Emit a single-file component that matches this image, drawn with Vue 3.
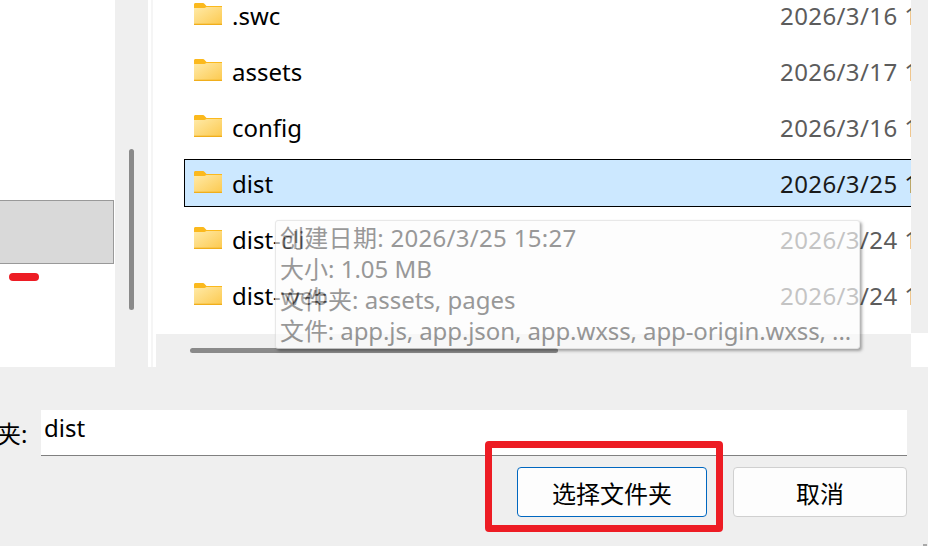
<template>
  <div class="dialog">
    <div class="top">
      <div class="nav">
        <div class="nav-box"></div>
        <div class="red-mark"></div>
      </div>
      <div class="nav-track">
        <div class="nav-thumb"></div>
      </div>
      <div class="gap-line"></div>
      <div class="list-wrap">
        <div class="rows">
          <div
            v-for="row in rows"
            :key="row.name"
            class="row"
            :class="{ selected: row.selected }"
          >
            <svg class="folder" viewBox="0 0 28 22" width="28" height="22">
              <defs>
                <linearGradient id="folderFill" x1="0" y1="0" x2="1" y2="1">
                  <stop offset="0" stop-color="#ffeaa8" />
                  <stop offset="1" stop-color="#fcc94e" />
                </linearGradient>
              </defs>
              <path d="M0 1.500C0 .6.6 0 1.500 0H8.500c1 0 1.500.4 2.100 1L12.500 3H28v4H0z" fill="#fbb91d" />
              <path d="M0 5h10.500l2-1H28v16.500c0 .9-.6 1.500-1.500 1.500h-25C.6 22 0 21.400 0 20.500z" fill="url(#folderFill)" />
              <rect x="0" y="20.700" width="28" height="1.300" fill="#f0ae1c" />
            </svg>
            <span class="name">{{ row.name }}</span>
            <span class="date">{{ row.date }}</span>
          </div>
        </div>
        <div class="h-track">
          <div class="h-thumb"></div>
        </div>
        <!-- tooltip caught mid fade-in, so the whole thing is translucent -->
        <div class="tip">
          <div class="digits">创建日期: 2026/3/25 15:27</div>
          <div>大小: 1.05 MB</div>
          <div>文件夹: assets, pages</div>
          <div class="long">文件: app.js, app.json, app.wxss, app-origin.wxss, ...</div>
        </div>
      </div>
      <div class="v-side">
        <div class="v-track"></div>
        <div class="corner"></div>
      </div>
    </div>

    <div class="bottom">
      <div class="field">
        <span class="label">文件夹:</span>
        <div class="input">dist</div>
      </div>
      <div class="buttons">
        <button class="btn primary">选择文件夹</button>
        <button class="btn cancel">取消</button>
      </div>
      <div class="highlight"></div>
      <div class="grip"></div>
    </div>
  </div>
</template>

<script setup>
const rows = [
  { name: '.swc', date: '2026/3/16 15:20' },
  { name: 'assets', date: '2026/3/17 10:12' },
  { name: 'config', date: '2026/3/16 15:20' },
  { name: 'dist', date: '2026/3/25 15:27', selected: true },
  { name: 'dist-cli', date: '2026/3/24 18:02' },
  { name: 'dist-web', date: '2026/3/24 18:05' },
]
</script>

<style>
html, body {
  margin: 0;
  overflow: hidden;
}
</style>

<style scoped>
.dialog {
  display: flex;
  flex-direction: column;
  width: 928px;
  height: 546px;
  overflow: hidden;
  background: #efefef;
  font-family: "Noto Sans", "Noto Sans CJK SC", sans-serif;
  font-size: 24px;
  color: #000;
}

.top {
  display: flex;
  height: 367px;
}

.nav {
  width: 115px;
  background: #fff;
  padding-top: 200px;
  box-sizing: border-box;
}

.nav-box {
  width: 114px;
  height: 64px;
  box-sizing: border-box;
  background: #d9d9d9;
  border: 1px solid #999;
  border-left: 0;
}

.red-mark {
  width: 30px;
  height: 8px;
  margin: 9px 0 0 9px;
  border-radius: 4px;
  background: #ed1c24;
}

.nav-track {
  width: 33px;
  padding-top: 149px;
  box-sizing: border-box;
  background: #efefef;
}

.nav-thumb {
  width: 5px;
  height: 161px;
  margin-left: 14px;
  border-radius: 3px;
  background: #8a8a8a;
}

.gap-line {
  width: 3px;
  background: #fff;
  border-right: 2px solid #f5f5f5;
}

.list-wrap {
  position: relative;
  width: 758px;
  display: flex;
  flex-direction: column;
  background: #fff;
}

.rows {
  flex: 1;
  overflow: hidden;
  padding-left: 31px;
}

.row {
  display: flex;
  align-items: center;
  height: 48px;
  margin-bottom: 8px;
  padding-left: 10px;
  box-sizing: border-box;
  white-space: nowrap;
}

.row:first-child {
  margin-top: -9px;
}

.row.selected {
  background: #cce8ff;
  border: 1px solid #000;
  border-right: 0;
  padding-left: 9px;
}

.folder {
  flex: none;
  margin-top: -2px;
}

.name {
  width: 549px;
  margin-left: 10px;
  flex: none;
}

.date {
  color: #5c5c5c;
  flex: none;
  letter-spacing: 0.4px;
  margin-left: -1px;
}

.selected .date {
  color: #1a1a1a;
}

.h-track {
  height: 33px;
  margin-left: 3px;
  padding-top: 14px;
  box-sizing: border-box;
  background: #efefef;
}

.h-thumb {
  width: 368px;
  height: 5px;
  margin-left: 34px;
  border-radius: 3px;
  background: #8a8a8a;
}

.tip {
  position: absolute;
  left: 122px;
  top: 220px;
  width: 585px;
  height: 129px;
  box-sizing: border-box;
  padding: 1px 0 0 4px;
  border: 1px solid #dcdcdc;
  border-radius: 3px;
  background: #fcfcfc;
  box-shadow: 2px 2px 3px rgba(0, 0, 0, 0.5);
  color: #626262;
  line-height: 31px;
  white-space: nowrap;
  overflow: hidden;
  opacity: 0.65;
}

.digits {
  letter-spacing: 0.3px;
}

.long {
  letter-spacing: -0.1px;
}

.v-side {
  flex: 1;
  display: flex;
  flex-direction: column;
}

.v-track {
  height: 333px;
  background: #efefef;
}

.corner {
  flex: 1;
  background: #fff;
}

.bottom {
  position: relative;
  flex: 1;
  padding-top: 43px;
}

.field {
  display: flex;
  height: 46px;
  margin-left: -51px;
  padding-right: 21px;
}

.label {
  width: 92px;
  flex: none;
  line-height: 48px;
}

.input {
  flex: 1;
  box-sizing: border-box;
  padding: 0 3px;
  background: #fff;
  border-bottom: 1px solid #808080;
  line-height: 36px;
}

.buttons {
  display: flex;
  justify-content: flex-end;
  gap: 26px;
  margin-top: 11px;
  padding-right: 21px;
}

.btn {
  height: 50px;
  box-sizing: border-box;
  font: inherit;
  color: #000;
  background: #fdfdfd;
  border-radius: 4px;
  padding: 0;
}

.primary {
  width: 190px;
  border: 1px solid #0067c0;
}

.cancel {
  width: 174px;
  border: 1px solid #d0d0d0;
}

.highlight {
  position: absolute;
  left: 485px;
  top: 74px;
  width: 238px;
  height: 91px;
  box-sizing: border-box;
  border: 7px solid #ed1c24;
  border-radius: 4px;
}

.grip {
  position: absolute;
  right: 1px;
  bottom: 0;
  width: 4px;
  height: 2px;
  background: #a8a8a8;
}
</style>
